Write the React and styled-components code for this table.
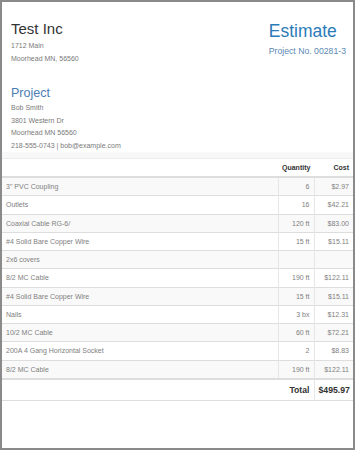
import React from 'react';
import styled, { createGlobalStyle } from 'styled-components';

const GlobalStyle = createGlobalStyle`
  html, body {
    margin: 0;
    padding: 0;
    background: #fff;
  }
  body {
    font-family: "Liberation Sans", Arial, sans-serif;
  }
`;

const Page = styled.div`
  width: 355px;
  height: 450px;
  box-sizing: border-box;
  border: 2px solid #8a8a8a;
  background: #fff;
  overflow: hidden;
`;

const Header = styled.header`
  display: flex;
  justify-content: space-between;
  align-items: flex-start;
  padding: 18px 7px 0 9px;
`;

const Company = styled.h1`
  margin: 0 0 2px;
  font-size: 15px;
  line-height: 18px;
  font-weight: normal;
  color: #333;
`;

const Line = styled.div`
  font-size: 7px;
  line-height: 12.5px;
  color: #7a7a7a;
`;

const DocBlock = styled.div`
  margin-top: 1px;
`;

const DocTitle = styled.h2`
  margin: 0;
  font-size: 17.5px;
  line-height: 20px;
  font-weight: normal;
  color: #2b7bb9;
`;

const DocNumber = styled.div`
  margin-top: 3.5px;
  font-size: 8.7px;
  line-height: 12px;
  color: #5b88b5;
`;

const ProjectBlock = styled.section`
  padding: 21px 9px 0;
`;

const SectionTitle = styled.h3`
  margin: 0 0 1px;
  font-size: 12.5px;
  line-height: 15px;
  font-weight: normal;
  color: #4a7db3;
`;

const Band = styled.div`
  height: 6px;
  background: #f8f8f8;
  border-bottom: 1px solid #ececec;
`;

const Table = styled.table`
  width: 100%;
  table-layout: fixed;
  border-collapse: collapse;
  font-size: 7px;
`;

const HeadCell = styled.th`
  padding: 3px 4px;
  line-height: 11px;
  font-weight: bold;
  color: #333;
  text-align: ${(p) => (p.$num ? 'right' : 'left')};
  border-bottom: 2px solid #ddd;
  width: ${(p) => p.$w || 'auto'};
  white-space: nowrap;
`;

const Row = styled.tr`
  background: ${(p) => (p.$odd ? '#f9f9f9' : '#fff')};
`;

const Cell = styled.td`
  padding: 3px 4px;
  line-height: 11.27px;
  color: #808080;
  text-align: ${(p) => (p.$num ? 'right' : 'left')};
  border-top: 1px solid #ddd;
  border-left: ${(p) => (p.$num ? '1px solid #e6e6e6' : 'none')};
  white-space: nowrap;
`;

const TotalCell = styled.td`
  padding: 3px 4px;
  line-height: 14px;
  font-size: 8.7px;
  font-weight: bold;
  color: #333;
  text-align: right;
  border-top: 2px solid #ddd;
  border-bottom: 1px solid #ddd;
  border-left: ${(p) => (p.$sep ? '1px solid #e6e6e6' : 'none')};
  white-space: nowrap;
`;

const items = [
  ['3" PVC Coupling', '6', '$2.97'],
  ['Outlets', '16', '$42.21'],
  ['Coaxial Cable RG-6/', '120 ft', '$83.00'],
  ['#4 Solid Bare Copper Wire', '15 ft', '$15.11'],
  ['2x6 covers', '', ''],
  ['8/2 MC Cable', '190 ft', '$122.11'],
  ['#4 Solid Bare Copper Wire', '15 ft', '$15.11'],
  ['Nails', '3 bx', '$12.31'],
  ['10/2 MC Cable', '60 ft', '$72.21'],
  ['200A 4 Gang Horizontal Socket', '2', '$8.83'],
  ['8/2 MC Cable', '190 ft', '$122.11'],
];

export default function App() {
  return (
    <>
      <GlobalStyle />
      <Page>
        <Header>
          <div>
            <Company>Test Inc</Company>
            <Line>1712 Main</Line>
            <Line>Moorhead MN, 56560</Line>
          </div>
          <DocBlock>
            <DocTitle>Estimate</DocTitle>
            <DocNumber>Project No. 00281-3</DocNumber>
          </DocBlock>
        </Header>

        <ProjectBlock>
          <SectionTitle>Project</SectionTitle>
          <Line>Bob Smith</Line>
          <Line>3801 Western Dr</Line>
          <Line>Moorhead MN 56560</Line>
          <Line>218-555-0743 | bob@example.com</Line>
        </ProjectBlock>

        <Band />

        <Table>
          <thead>
            <tr>
              <HeadCell></HeadCell>
              <HeadCell $num $w="28px">Quantity</HeadCell>
              <HeadCell $num $w="31px">Cost</HeadCell>
            </tr>
          </thead>
          <tbody>
            {items.map(([name, qty, cost], i) => (
              <Row key={i} $odd={i % 2 === 0}>
                <Cell>{name}</Cell>
                <Cell $num>{qty}</Cell>
                <Cell $num>{cost}</Cell>
              </Row>
            ))}
            <tr>
              <TotalCell colSpan={2}>Total</TotalCell>
              <TotalCell $sep>$495.97</TotalCell>
            </tr>
          </tbody>
        </Table>
      </Page>
    </>
  );
}
